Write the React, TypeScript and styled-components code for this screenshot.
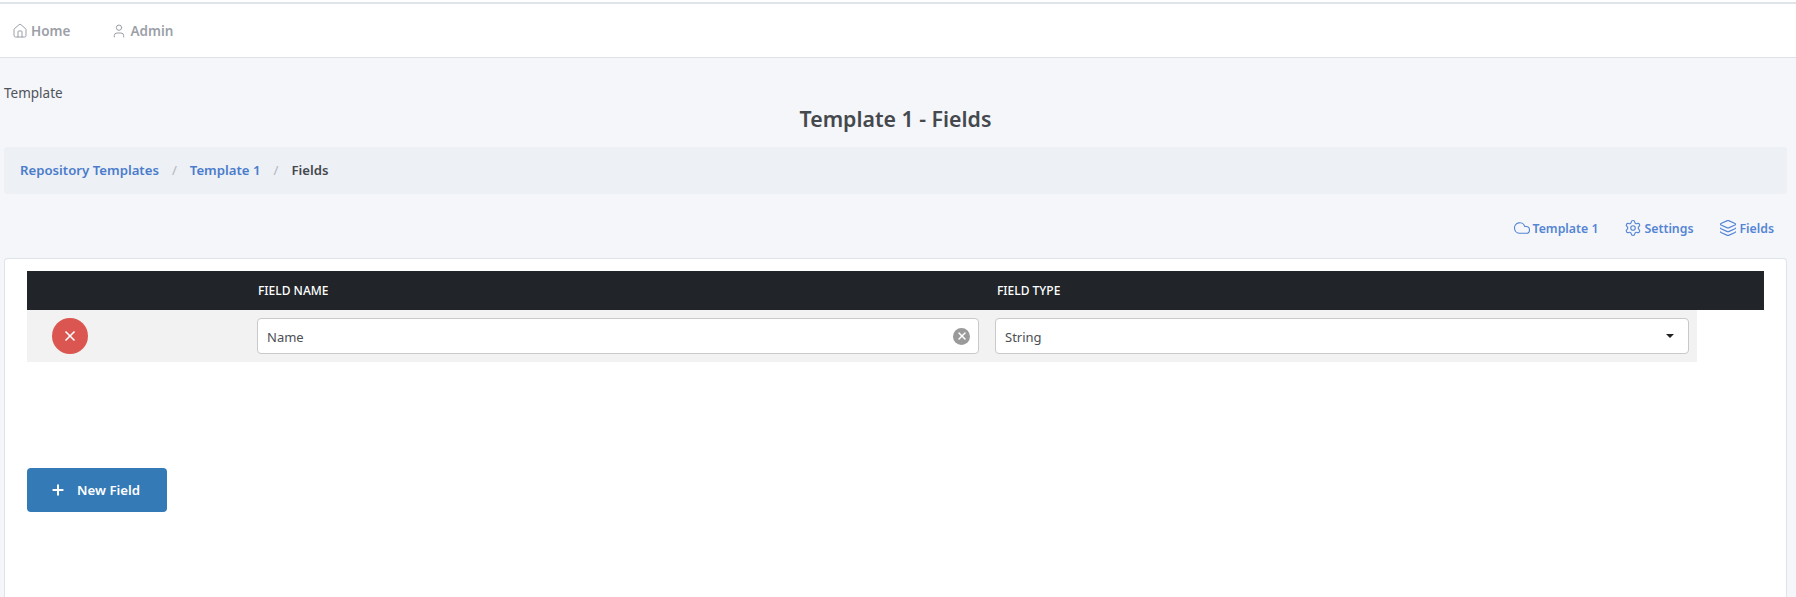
import React from "react"
import styled, { createGlobalStyle } from "styled-components"
import { Cloud, Home, Layers, Plus, Settings, User, X } from "lucide-react"

const GlobalStyle = createGlobalStyle`
  html, body {
    margin: 0;
    height: 597px;
    overflow: hidden;
    background: #f4f6fa;
    color: #4a4d52;
    font-family: "Noto Sans", "Open Sans", sans-serif;
    font-size: 14px;
  }
  * { box-sizing: border-box; }
`

const Page = styled.div`
  height: 597px;
  display: flex;
  flex-direction: column;
`

const TopGap = styled.div`
  height: 2px;
  flex: none;
  background: #fff;
`

const Nav = styled.nav`
  height: 56px;
  flex: none;
  display: flex;
  align-items: center;
  background: #fff;
  border-top: 2px solid #dfe3ea;
  border-bottom: 1px solid #dde1e9;
  padding-left: 12px;
  gap: 41px;
`

const NavItem = styled.a`
  display: flex;
  align-items: center;
  gap: 3px;
  color: #9c9fa8;
  font-size: 13.5px;
  font-weight: 600;
`

const Content = styled.main`
  flex: 1;
  display: flex;
  flex-direction: column;
  padding: 0 9px 0 4px;
  min-height: 0;
`

const PageLabel = styled.div`
  margin-top: 25px;
  height: 20px;
  line-height: 20px;
  font-size: 13.5px;
  color: #50535a;
`

const Title = styled.h1`
  margin: 2px 0 0;
  height: 28px;
  line-height: 28px;
  text-align: center;
  font-size: 21.3px;
  font-weight: 600;
  color: #45484d;
`

const Breadcrumb = styled.div`
  margin-top: 14px;
  height: 47px;
  display: flex;
  align-items: center;
  padding: 0 0 2px 16px;
  background: #edf0f5;
  border-radius: 3px;
  font-size: 13.2px;
  font-weight: 600;
`

const Crumb = styled.a`
  color: #4a7ccb;
`

const CurrentCrumb = styled.span`
  color: #45484d;
`

const Slash = styled.span`
  color: #b4b7bd;
  padding: 0 13px;
  font-weight: 400;
`

const Actions = styled.div`
  margin-top: 23px;
  height: 22px;
  display: flex;
  justify-content: flex-end;
  align-items: center;
  gap: 26px;
  padding-right: 13px;
`

const ActionLink = styled.a`
  display: flex;
  align-items: center;
  gap: 2px;
  color: #5585d4;
  font-size: 12.3px;
  font-weight: 600;
`

const Card = styled.section`
  margin-top: 19px;
  flex: 1;
  background: #fff;
  border: 1px solid #dfe3ea;
  border-bottom: none;
  border-radius: 4px 4px 0 0;
  padding: 12px 22px 0;
`

const HeadRow = styled.div`
  height: 39px;
  display: flex;
  align-items: center;
  background: #212529;
  color: #fff;
  font-size: 12px;
  font-weight: 500;
`

const HeadCell = styled.div<{ $width: number }>`
  width: ${p => p.$width}px;
  flex: none;
`

const FieldRow = styled.div`
  width: 1670px;
  height: 52px;
  display: flex;
  align-items: center;
  background: #f2f2f2;
`

const RemoveCell = styled.div`
  width: 230px;
  flex: none;
  padding-left: 25px;
`

const RemoveButton = styled.button`
  width: 36px;
  height: 36px;
  padding: 0;
  border: none;
  border-radius: 50%;
  background: #db5650;
  color: #fff;
  display: flex;
  align-items: center;
  justify-content: center;
`

const InputBox = styled.div`
  height: 36px;
  background: #fff;
  border: 1px solid #c9c9c9;
  border-radius: 4px;
  display: flex;
  align-items: center;
  justify-content: space-between;
  padding: 0 9px;
  font-size: 13px;
  color: #4c4f54;
`

const FieldText = styled.span`
  padding-top: 2px;
`

const NameBox = styled(InputBox)`
  width: 722px;
  margin-right: 16px;
  padding-right: 8px;
`

const TypeBox = styled(InputBox)`
  width: 694px;
  padding-right: 14px;
`

const ClearIcon = styled.span`
  width: 17px;
  height: 17px;
  border-radius: 50%;
  background: #9a9a9a;
  color: #fff;
  display: flex;
  align-items: center;
  justify-content: center;
`

const Caret = styled.span`
  width: 0;
  height: 0;
  border-left: 4px solid transparent;
  border-right: 4px solid transparent;
  border-top: 4px solid #222;
`

const NewFieldButton = styled.button`
  margin-top: 106px;
  width: 140px;
  height: 44px;
  padding: 0 4px 0 0;
  border: none;
  border-radius: 4px;
  background: #337ab7;
  color: #fff;
  display: flex;
  align-items: center;
  justify-content: center;
  gap: 11px;
  font-family: inherit;
  font-size: 13.2px;
  font-weight: 600;
`

export default function App() {
  return (
    <>
      <GlobalStyle />
      <Page>
        <TopGap />
        <Nav>
          <NavItem><Home size={16} strokeWidth={1.5} />Home</NavItem>
          <NavItem><User size={16} strokeWidth={1.5} />Admin</NavItem>
        </Nav>
        <Content>
          <PageLabel>Template</PageLabel>
          <Title>Template 1 - Fields</Title>
          <Breadcrumb>
            <Crumb>Repository Templates</Crumb>
            <Slash>/</Slash>
            <Crumb>Template 1</Crumb>
            <Slash>/</Slash>
            <CurrentCrumb>Fields</CurrentCrumb>
          </Breadcrumb>
          <Actions>
            <ActionLink><Cloud size={18} strokeWidth={1.5} />Template 1</ActionLink>
            <ActionLink><Settings size={18} strokeWidth={1.5} />Settings</ActionLink>
            <ActionLink><Layers size={18} strokeWidth={1.5} />Fields</ActionLink>
          </Actions>
          <Card>
            <HeadRow>
              <HeadCell $width={231} />
              <HeadCell $width={739}>FIELD NAME</HeadCell>
              <HeadCell $width={300}>FIELD TYPE</HeadCell>
            </HeadRow>
            <FieldRow>
              <RemoveCell>
                <RemoveButton><X size={16} strokeWidth={2.5} /></RemoveButton>
              </RemoveCell>
              <NameBox>
                <FieldText>Name</FieldText>
                <ClearIcon><X size={12} strokeWidth={3} /></ClearIcon>
              </NameBox>
              <TypeBox>
                <FieldText>String</FieldText>
                <Caret />
              </TypeBox>
            </FieldRow>
            <NewFieldButton><Plus size={16} strokeWidth={3} />New Field</NewFieldButton>
          </Card>
        </Content>
      </Page>
    </>
  )
}
